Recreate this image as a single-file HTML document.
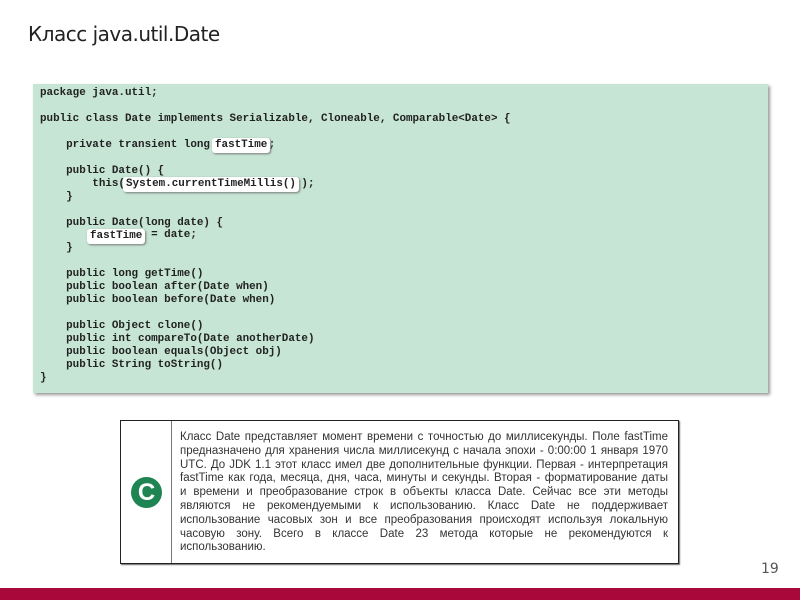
<!DOCTYPE html>
<html><head><meta charset="utf-8"><style>
body{margin:0;width:800px;height:600px;background:#fff;position:relative;overflow:hidden;font-family:"Liberation Sans",sans-serif}
.title{position:absolute;left:28px;top:22px;font-size:20px;color:#222;font-family:"DejaVu Sans","Liberation Sans",sans-serif;letter-spacing:-0.5px}
.code{position:absolute;left:33px;top:84px;width:735px;height:309px;background:#c6e5d4;box-shadow:2px 2px 3px #999}
pre{margin:0;position:absolute;left:7px;top:3px;font-family:"Liberation Mono",monospace;font-weight:bold;font-size:10.9px;line-height:12.95px;color:#222}
.hl{position:absolute;background:#fff;border-radius:3px;box-shadow:1px 1px 2px #777;font-family:"Liberation Mono",monospace;font-weight:bold;font-size:10.9px;line-height:15px;padding:0 3px;color:#222}
.box{position:absolute;left:120px;top:420px;width:557px;height:142px;border:1.5px solid #222;box-shadow:1px 1px 1px #666}
.div{position:absolute;left:50px;top:0;bottom:0;border-left:1px solid #777}
.circ{position:absolute;left:10px;top:56px;width:31px;height:31px;border-radius:50%;background:#1d8452;color:#fff;font-weight:bold;font-size:24px;line-height:31px;text-align:center}
.txt{position:absolute;left:59px;top:10px;width:488px;font-size:11.5px;line-height:13.8px;color:#333}
.txt div{text-align:justify;text-align-last:justify;white-space:nowrap}
.txt div.l{text-align-last:left}
.num{position:absolute;left:761px;top:561px;font-size:14px;color:#555;font-family:"DejaVu Sans",sans-serif}
.bar{position:absolute;left:0;top:588px;width:800px;height:12px;background:#a8083a}
</style></head><body>
<div class="title">Класс java.util.Date</div>
<div class="code"><pre>package java.util;

public class Date implements Serializable, Cloneable, Comparable&lt;Date&gt; {

    private transient long fastTime;

    public Date() {
        this(System.currentTimeMillis() );
    }

    public Date(long date) {
        fastTime = date;
    }

    public long getTime()
    public boolean after(Date when)
    public boolean before(Date when)

    public Object clone()
    public int compareTo(Date anotherDate)
    public boolean equals(Object obj)
    public String toString()
}</pre>
<div class="hl" style="left:179px;top:54px">fastTime</div>
<div class="hl" style="left:90px;top:93px">System.currentTimeMillis()</div>
<div class="hl" style="left:54px;top:145px">fastTime</div>
</div>
<div class="box"><div class="div"></div><div class="circ">C</div>
<div class="txt">
<div>Класс Date представляет момент времени с точностью до миллисекунды. Поле fastTime</div>
<div>предназначено для хранения числа миллисекунд с начала эпохи - 0:00:00 1 января 1970</div>
<div>UTC. До JDK 1.1 этот класс имел две дополнительные функции. Первая - интерпретация</div>
<div>fastTime как года, месяца, дня, часа, минуты и секунды. Вторая - форматирование даты</div>
<div>и времени и преобразование строк в объекты класса Date. Сейчас все эти методы</div>
<div>являются не рекомендуемыми к использованию. Класс Date не поддерживает</div>
<div>использование часовых зон и все преобразования происходят используя локальную</div>
<div>часовую зону. Всего в классе Date 23 метода которые не рекомендуются к</div>
<div class="l">использованию.</div>
</div></div>
<div class="num">19</div>
<div class="bar"></div>
</body></html>
